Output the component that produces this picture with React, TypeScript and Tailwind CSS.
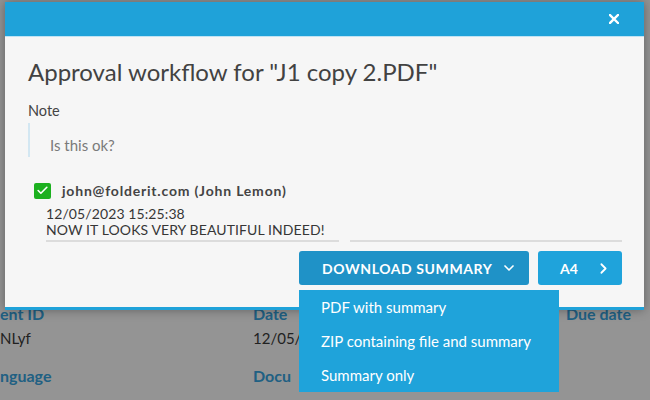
import { Check, ChevronDown, ChevronRight } from "lucide-react";

const font = { fontFamily: "Lato, 'Open Sans', Arial, sans-serif" };

function PageBehind() {
    return (
        <div className="w-full h-full bg-white relative overflow-hidden">
            <div className="pt-[303px] grid grid-cols-[253px_46px_267px_1fr] gap-y-[2px] text-[16px] whitespace-nowrap">
                <div className="font-bold text-[#37a6e2] leading-[22px]">ent ID</div>
                <div className="font-bold text-[#37a6e2] leading-[22px]">Date</div>
                <div />
                <div className="font-bold text-[#37a6e2] leading-[22px]">Due date</div>
                <div className="text-[#3a3a3a] leading-[22px] text-[15px]">NLyf</div>
                <div className="text-[#3a3a3a] leading-[22px] text-[15px]">12/05/</div>
                <div />
                <div />
                <div className="font-bold text-[#37a6e2] leading-[22px] mt-[14px]">nguage</div>
                <div className="font-bold text-[#37a6e2] leading-[22px] mt-[14px]">Docu</div>
                <div />
                <div />
            </div>
            {/* dim overlay */}
            <div className="absolute inset-0 bg-black/[0.42]" />
        </div>
    );
}

export default function App() {
    return (
        <div className="w-[650px] h-[400px] relative overflow-hidden" style={font}>
            <PageBehind />

            <div className="absolute left-[5px] top-[2px] w-[639px] shadow-[0_0_10px_rgba(0,0,0,0.35)]">
                <div className="h-[35px] bg-[#1fa2d9] flex items-center justify-end pr-[24px] border-b border-[#bfe3f4]">
                    <button className="w-[12px] h-[12px] flex items-center justify-center">
                        <svg width="10" height="10" viewBox="0 0 10 10">
                            <path d="M1 1L9 9M9 1L1 9" stroke="white" strokeWidth="2.4" strokeLinecap="square" />
                        </svg>
                    </button>
                </div>

                <div className="bg-[#f6f6f6] pl-[23px] pr-[22px] pt-[19px] pb-[22px] border-b-[3px] border-[#1fa2d9]">
                    <h1 className="text-[24px] leading-[32px] text-[#424242]">
                        Approval workflow for "J1 copy 2.PDF"
                    </h1>

                    <div className="mt-[13px] text-[14.5px] leading-[20px] text-[#444]">Note</div>
                    <div className="mt-[2px] border-l-2 border-[#d3e7f2] h-[34px] pl-[20px] pt-[12px] text-[15px] leading-[20px] text-[#7a7a7a]">
                        Is this ok?
                    </div>

                    <div className="mt-[23px] ml-[6px] flex items-center gap-[11px]">
                        <div className="w-[17px] h-[16px] rounded-[2px] bg-[#1cb01f] flex items-center justify-center">
                            <Check className="w-[13px] h-[13px] text-white" strokeWidth={3} />
                        </div>
                        <span className="text-[14px] font-bold text-[#444] tracking-[0.8px]">john@folderit.com (John Lemon)</span>
                    </div>

                    <div className="mt-[5px] ml-[18px] flex gap-[11px]">
                        <div className="w-[293px] border-b-2 border-[#dcdcdc] pb-[2px] text-[14px] leading-[16px] text-[#363636] tracking-[0.1px]">
                            <div>12/05/2023 15:25:38</div>
                            <div>NOW IT LOOKS VERY BEAUTIFUL INDEED!</div>
                        </div>
                        <div className="flex-1 border-b-2 border-[#dcdcdc]" />
                    </div>

                    <div className="mt-[9px] flex justify-end gap-[9px]">
                        <div className="relative">
                            <button className="w-[230px] h-[34px] rounded-[3px] bg-[#1f92c7] text-white font-bold text-[14px] uppercase flex items-center pl-[23px] gap-[9px] tracking-[0.6px]">
                                Download summary
                                <ChevronDown className="w-[16px] h-[16px]" strokeWidth={2.5} />
                            </button>
                            <div className="absolute left-0 top-[39px] w-[260px] bg-[#1fa3da] text-white text-[15px] z-10">
                                <div className="h-[34px] flex items-center pl-[22px]">PDF with summary</div>
                                <div className="h-[34px] flex items-center pl-[22px]">ZIP containing file and summary</div>
                                <div className="h-[34px] flex items-center pl-[22px]">Summary only</div>
                            </div>
                        </div>
                        <button className="w-[84px] h-[34px] rounded-[3px] bg-[#1fa3db] text-white font-bold text-[14px] flex items-center pl-[22px] pr-[10px] justify-between">
                            A4
                            <ChevronRight className="w-[17px] h-[17px]" strokeWidth={2.5} />
                        </button>
                    </div>
                </div>
            </div>
        </div>
    );
}
